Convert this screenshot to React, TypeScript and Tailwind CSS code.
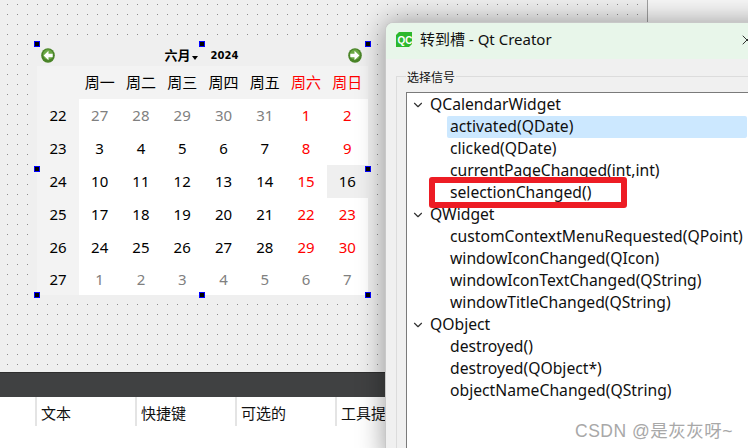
import { ChevronDown, X } from 'lucide-react';

const WEEK_DAYS = ['周一', '周二', '周三', '周四', '周五', '周六', '周日'];

// weekday 5 and 6 are the red columns; dim = not in this month
const WEEKS = [
  { no: 22, days: [27, 28, 29, 30, 31, 1, 2], dimTo: 5 },
  { no: 23, days: [3, 4, 5, 6, 7, 8, 9], dimTo: 0 },
  { no: 24, days: [10, 11, 12, 13, 14, 15, 16], dimTo: 0 },
  { no: 25, days: [17, 18, 19, 20, 21, 22, 23], dimTo: 0 },
  { no: 26, days: [24, 25, 26, 27, 28, 29, 30], dimTo: 0 },
  { no: 27, days: [1, 2, 3, 4, 5, 6, 7], dimTo: 7 },
];

const SIGNAL_GROUPS = [
  {
    name: 'QCalendarWidget',
    signals: ['activated(QDate)', 'clicked(QDate)', 'currentPageChanged(int,int)', 'selectionChanged()'],
  },
  {
    name: 'QWidget',
    signals: [
      'customContextMenuRequested(QPoint)',
      'windowIconChanged(QIcon)',
      'windowIconTextChanged(QString)',
      'windowTitleChanged(QString)',
    ],
  },
  {
    name: 'QObject',
    signals: ['destroyed()', 'destroyed(QObject*)', 'objectNameChanged(QString)'],
  },
];

const TABLE_COLUMNS = ['文本', '快捷键', '可选的', '工具提示'];

function Handle({ className }: { className: string }) {
  return <div className={`absolute h-[6px] w-[6px] border border-[#0000ff] bg-black ${className}`} />;
}

function NavIcon({ dir }: { dir: 'left' | 'right' }) {
  return (
    <svg width="14" height="15" viewBox="0 0 14 15">
      <ellipse cx="7" cy="7.5" rx="6.8" ry="7.3" fill="#4a8428" />
      <circle cx="7" cy="6.6" r="5" fill="#6ba845" />
      <path
        d={dir === 'left' ? 'M7.5 2.8 2.6 7.5l4.9 4.7V9.2h4.2V5.8H7.5z' : 'M6.5 2.8l4.9 4.7-4.9 4.7V9.2H2.3V5.8h4.2z'}
        fill="#fff"
      />
    </svg>
  );
}

function Calendar() {
  return (
    <div className="absolute left-[37px] top-[44px] h-[251px] w-[331px] bg-[#efefef] font-['Noto_Sans','Noto_Sans_CJK_SC',sans-serif] text-[15px] text-black">
      <div className="flex h-[22px] items-center justify-between pl-[4px] pr-[6px]">
        <NavIcon dir="left" />
        <div className="flex items-center font-['Noto_Sans_CJK_SC',sans-serif] text-[13px] font-bold">
          <span>六月</span>
          <span className="ml-[1px] mt-[6px] h-0 w-0 border-x-[3.5px] border-t-[4px] border-x-transparent border-t-black" />
          <span className="ml-[13px] font-['DejaVu_Sans',sans-serif] text-[10px]">2024</span>
        </div>
        <NavIcon dir="right" />
      </div>
      <div className="grid h-[229px] grid-cols-[42px_repeat(7,1fr)] grid-rows-[33px_33px_33px_33px_33px_33px_1fr] bg-[#f3f3f3]">
        <div />
        {WEEK_DAYS.map((d, i) => (
          <div
            key={d}
            className={`flex items-center justify-center font-['Noto_Sans_CJK_SC',sans-serif] ${i > 4 ? 'text-[#ff0000]' : ''}`}
          >
            {d}
          </div>
        ))}
        {WEEKS.map((week) => [
          <div key={week.no} className="flex items-center justify-center">
            {week.no}
          </div>,
          ...week.days.map((day, i) => {
            const dim = i < week.dimTo;
            const red = i > 4 && week.dimTo < 7;
            const selected = week.no === 24 && day === 16;
            return (
              <div
                key={`${week.no}-${i}`}
                className={`flex items-center justify-center ${selected ? 'bg-[#efefef]' : 'bg-white'} ${
                  dim ? 'text-[#808080]' : red && !selected ? 'text-[#ff0000]' : ''
                }`}
              >
                {day}
              </div>
            );
          }),
        ])}
      </div>
      <Handle className="-left-[3px] -top-[3px]" />
      <Handle className="left-[162px] -top-[3px]" />
      <Handle className="-right-[3px] -top-[3px]" />
      <Handle className="-left-[3px] top-[122px]" />
      <Handle className="-right-[3px] top-[122px]" />
      <Handle className="-bottom-[3px] -left-[3px]" />
      <Handle className="-bottom-[3px] left-[162px]" />
      <Handle className="-bottom-[3px] -right-[3px]" />
    </div>
  );
}

function QtLogo() {
  return (
    <svg width="16" height="15" viewBox="0 0 16 15">
      <path d="M3 0h13v12l-3 3H0V3z" fill="#2cb82c" />
      <text x="1.5" y="11.5" fontSize="10" fontWeight="700" fill="#fff" fontFamily="Liberation Sans, sans-serif">
        QC
      </text>
    </svg>
  );
}

function SignalDialog() {
  return (
    <div className="absolute left-[385px] top-[22px] h-[440px] w-[400px] overflow-hidden rounded-tl-[8px] border-l border-t border-[#c8c8c8] bg-[#f0f0f0] font-['Noto_Sans','Noto_Sans_CJK_SC',sans-serif] text-[15.7px] text-[#101010] shadow-[0_0_28px_rgba(0,0,0,0.4)]">
      <div className="flex h-[36px] items-center bg-[#e8f6ea] pb-[3px] pl-[10px]">
        <QtLogo />
        <span className="ml-[8px] text-[15px]">转到槽 - Qt Creator</span>
        <X size={16} strokeWidth={1.4} className="ml-[187px] text-[#222]" />
      </div>
      <div className="relative mx-[10px] mt-[17px] h-full border-l border-t border-[#dcdcdc] pl-[9px] pt-[15px]">
        <span className="absolute -top-[9px] left-[9px] bg-[#f0f0f0] px-[1px] text-[12px] leading-[20px]">选择信号</span>
        <div className="relative h-[400px] border border-[#7a7a7a] bg-white">
          <div className="pt-[1px]">
            {SIGNAL_GROUPS.map((group) => (
              <div key={group.name}>
                <div className="flex h-[22px] items-center pl-[4px]">
                  <ChevronDown size={14} strokeWidth={2} className="text-[#333]" />
                  <span className="ml-[5px]">{group.name}</span>
                </div>
                {group.signals.map((signal) => (
                  <div
                    key={signal}
                    className={`ml-[40px] flex h-[22px] w-[300px] items-center whitespace-nowrap pl-[3px] ${signal === 'activated(QDate)' ? 'rounded-[2px] bg-[#cce8ff]' : ''}`}
                  >
                    {signal}
                  </div>
                ))}
              </div>
            ))}
          </div>
          <div className="absolute left-[22px] top-[84px] h-[31px] w-[198px] rounded-[3px] border-[6px] border-[#ed1c24]" />
        </div>
      </div>
    </div>
  );
}

export default function App() {
  return (
    <div className="relative h-[448px] w-[748px] overflow-hidden bg-white">
      <div className="flex h-[372px] bg-[#f7f7f7]">
        <div className="h-full w-[648px] border-r border-[#a0a0a0] bg-[#efefef] bg-[radial-gradient(circle_at_7.5px_4.5px,#8c8c8c_0.5px,transparent_0.8px)] bg-[length:10px_10px]" />
      </div>
      <div className="h-[25px] border-t border-[#2e2e2e] bg-[#404142]" />
      <div className="flex h-[29px] pl-[35px] font-['Noto_Sans_CJK_SC',sans-serif] text-[15px] text-[#111]">
        {TABLE_COLUMNS.map((col) => (
          <div key={col} className="flex w-[100px] shrink-0 items-center overflow-hidden whitespace-nowrap border-l-2 border-[#e4e4e4] pl-[4px] pt-[3px]">
            {col}
          </div>
        ))}
      </div>
      <Calendar />
      <SignalDialog />
      <div className="absolute left-[575px] top-[418px] font-['Liberation_Sans','Noto_Sans_CJK_SC',sans-serif] text-[17.5px] tracking-[0.5px] text-[#a8a8a8]">
        CSDN @是灰灰呀~
      </div>
    </div>
  );
}
